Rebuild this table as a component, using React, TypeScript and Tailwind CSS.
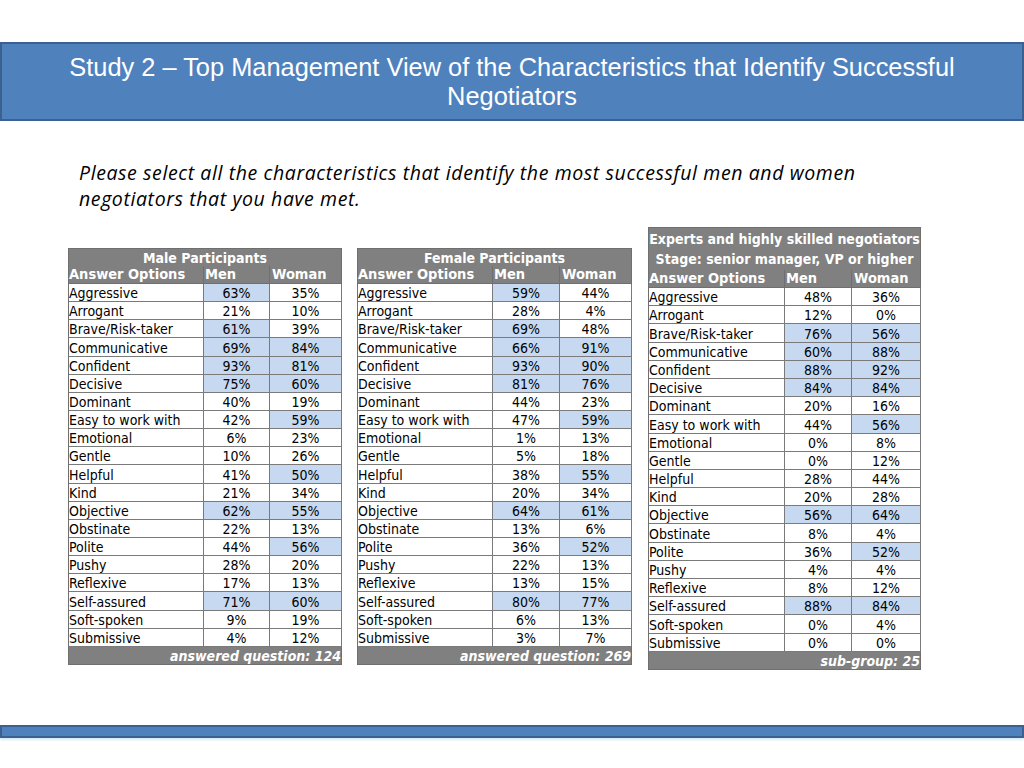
import React from 'react';

const LABELS = [
  'Aggressive',
  'Arrogant',
  'Brave/Risk-taker',
  'Communicative',
  'Confident',
  'Decisive',
  'Dominant',
  'Easy to work with',
  'Emotional',
  'Gentle',
  'Helpful',
  'Kind',
  'Objective',
  'Obstinate',
  'Polite',
  'Pushy',
  'Reflexive',
  'Self-assured',
  'Soft-spoken',
  'Submissive',
];

// "*" marks a highlighted (blue) cell
const MALE = [
  ['63*', '35'], ['21', '10'], ['61*', '39'], ['69*', '84*'], ['93*', '81*'],
  ['75*', '60*'], ['40', '19'], ['42', '59*'], ['6', '23'], ['10', '26'],
  ['41', '50*'], ['21', '34'], ['62*', '55*'], ['22', '13'], ['44', '56*'],
  ['28', '20'], ['17', '13'], ['71*', '60*'], ['9', '19'], ['4', '12'],
];

const FEMALE = [
  ['59*', '44'], ['28', '4'], ['69*', '48'], ['66*', '91*'], ['93*', '90*'],
  ['81*', '76*'], ['44', '23'], ['47', '59*'], ['1', '13'], ['5', '18'],
  ['38', '55*'], ['20', '34'], ['64*', '61*'], ['13', '6'], ['36', '52*'],
  ['22', '13'], ['13', '15'], ['80*', '77*'], ['6', '13'], ['3', '7'],
];

const EXPERTS = [
  ['48', '36'], ['12', '0'], ['76*', '56*'], ['60*', '88*'], ['88*', '92*'],
  ['84*', '84*'], ['20', '16'], ['44', '56*'], ['0', '8'], ['0', '12'],
  ['28', '44'], ['20', '28'], ['56*', '64*'], ['8', '4'], ['36', '52*'],
  ['4', '4'], ['8', '12'], ['88*', '84*'], ['0', '4'], ['0', '0'],
];

const tableFont = {
  fontFamily: "Tahoma, 'DejaVu Sans Condensed', 'Liberation Sans', sans-serif",
};

function Cell({ value }: { value: string }) {
  const hi = value.endsWith('*');
  const num = value.replace('*', '');
  return (
    <div
      className={`flex h-full items-end justify-center border-r border-b border-[#7a7a7a] pb-[1px] leading-none ${
        hi ? 'bg-[#c6d9f1]' : 'bg-white'
      }`}
    >
      {num}%
    </div>
  );
}

function SurveyTable({
  title,
  titleH,
  data,
  footer,
  cols,
  rowH,
  className,
}: {
  title: string[];
  titleH: string;
  data: string[][];
  footer: string;
  cols: string;
  rowH: string;
  className?: string;
}) {
  return (
    <div
      className={`flex flex-col border-l border-[#6f6f6f] text-[14px] text-black ${className ?? ''}`}
      style={tableFont}
    >
      {/* Title */}
      <div
        className={`flex ${titleH} flex-col justify-center border-t border-r border-[#6f6f6f] bg-[#808080] text-center font-bold leading-[20px] text-white`}
      >
        {title.map((t) => (
          <div key={t}>{t}</div>
        ))}
      </div>

      {/* Column header */}
      <div
        className={`grid ${cols} h-[18px] bg-[#808080] text-[14.5px] font-bold leading-[17px] text-white`}
      >
        <div className="border-r border-b border-[#6f6f6f]">Answer Options</div>
        <div className="border-r border-b border-[#6f6f6f] pl-[1px]">Men</div>
        <div className="border-r border-b border-[#6f6f6f] pl-[2px]">Woman</div>
      </div>

      {/* Rows */}
      {data.map((r, i) => (
        <div key={LABELS[i]} className={`grid ${cols} ${rowH}`}>
          <div className="flex items-end border-r border-b border-[#7a7a7a] pb-[1px] leading-none">
            {LABELS[i]}
          </div>
          <Cell value={r[0]} />
          <Cell value={r[1]} />
        </div>
      ))}

      {/* Footer */}
      <div className="h-[18px] overflow-hidden whitespace-nowrap border-r border-b border-[#6f6f6f] bg-[#808080] text-right font-bold italic leading-[18px] text-white">
        {footer}
      </div>
    </div>
  );
}

export default function App() {
  return (
    <div className="flex h-[768px] w-[1024px] flex-col overflow-hidden bg-white">
      {/* Title banner */}
      <div className="mt-[42px] flex h-[79px] items-center justify-center border-2 border-[#3b6190] bg-[#4f81bd] px-6">
        <h1
          className="text-center text-[25.4px] leading-[29px] text-white"
          style={{ fontFamily: "'Liberation Sans', Arial, sans-serif" }}
        >
          Study 2 – Top Management View of the Characteristics that Identify Successful
          <br />
          Negotiators
        </h1>
      </div>

      {/* Question */}
      <p
        className="mt-[39px] pl-[79px] pr-[60px] text-[19.5px] italic leading-[26px] tracking-[0.6px] text-black"
        style={{ fontFamily: "'Open Sans', Lato, sans-serif" }}
      >
        Please select all the characteristics that identify the most successful men and women
        <br />
        negotiators that you have met.
      </p>

      {/* Tables */}
      <div className="mt-[15px] flex items-start pl-[68px]">
        <SurveyTable
          className="mt-[21px]"
          title={['Male Participants']}
          titleH="h-[18px]"
          data={MALE}
          footer="answered question: 124"
          cols="grid-cols-[135px_66px_72px]"
          rowH="h-[18.15px]"
        />
        <SurveyTable
          className="ml-[15px] mt-[21px]"
          title={['Female Participants']}
          titleH="h-[18px]"
          data={FEMALE}
          footer="answered question: 269"
          cols="grid-cols-[135px_67px_72px]"
          rowH="h-[18.15px]"
        />
        <SurveyTable
          className="ml-[16px]"
          title={['Experts and highly skilled negotiators', 'Stage: senior manager, VP or higher']}
          titleH="h-[43px]"
          data={EXPERTS}
          footer="sub-group: 25"
          cols="grid-cols-[136px_67px_69px]"
          rowH="h-[18.2px]"
        />
      </div>

      {/* Bottom rule */}
      <div className="mt-auto mb-[30px] h-[13px] border-2 border-[#3b6190] bg-[#4f81bd] shadow-[0_2px_2px_rgba(160,200,230,0.4)]" />
    </div>
  );
}
